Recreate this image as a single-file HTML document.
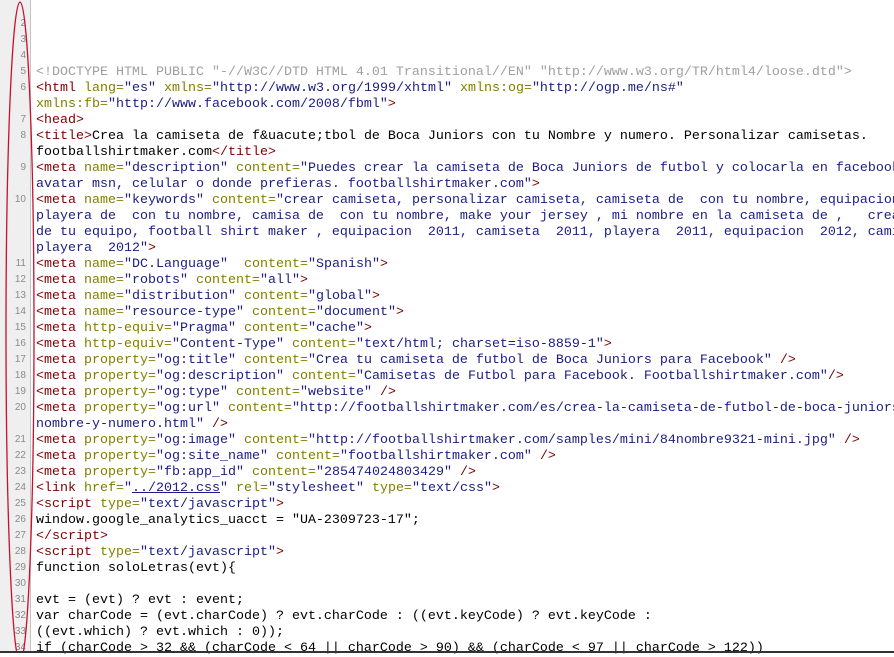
<!DOCTYPE html>
<html><head><style>
body{margin:0;width:894px;height:653px;overflow:hidden;background:#fff;position:relative;font-family:"Liberation Mono",monospace;}
#g{position:absolute;left:0;top:0;width:30px;height:653px;background:#efefef;border-right:1px solid #c4c4c4;}
.n{position:absolute;right:4px;width:26px;text-align:right;font:10px "Liberation Sans",sans-serif;color:#8a8a8a;line-height:16px;}
#c{position:absolute;left:36px;top:1px;font-size:13.33px;line-height:16px;color:#000;}
#c div{height:16px;white-space:pre;}
.t{color:#800000}.a{color:#808000}.v{color:#1c1c84}.d{color:#a0a0a0}
</style></head><body>
<div id="g">
<div class="n" style="top:16px">2</div><div class="n" style="top:32px">3</div><div class="n" style="top:48px">4</div><div class="n" style="top:64px">5</div><div class="n" style="top:80px">6</div><div class="n" style="top:112px">7</div><div class="n" style="top:128px">8</div><div class="n" style="top:160px">9</div><div class="n" style="top:192px">10</div><div class="n" style="top:256px">11</div><div class="n" style="top:272px">12</div><div class="n" style="top:288px">13</div><div class="n" style="top:304px">14</div><div class="n" style="top:320px">15</div><div class="n" style="top:336px">16</div><div class="n" style="top:352px">17</div><div class="n" style="top:368px">18</div><div class="n" style="top:384px">19</div><div class="n" style="top:400px">20</div><div class="n" style="top:432px">21</div><div class="n" style="top:448px">22</div><div class="n" style="top:464px">23</div><div class="n" style="top:480px">24</div><div class="n" style="top:496px">25</div><div class="n" style="top:512px">26</div><div class="n" style="top:528px">27</div><div class="n" style="top:544px">28</div><div class="n" style="top:560px">29</div><div class="n" style="top:576px">30</div><div class="n" style="top:592px">31</div><div class="n" style="top:608px">32</div><div class="n" style="top:624px">33</div><div class="n" style="top:640px">34</div>
</div>
<div id="c">
<div> </div><div> </div><div> </div><div> </div>
<div class="d">&lt;!DOCTYPE HTML PUBLIC "-//W3C//DTD HTML 4.01 Transitional//EN" "http://www.w3.org/TR/html4/loose.dtd"&gt;</div>
<div><span class="t">&lt;html</span> <span class="a">lang=</span><span class="v">"es"</span> <span class="a">xmlns=</span><span class="v">"http://www.w3.org/1999/xhtml"</span> <span class="a">xmlns:og=</span><span class="v">"http://ogp.me/ns#"</span></div>
<div><span class="a">xmlns:fb=</span><span class="v">"http://www.facebook.com/2008/fbml"</span><span class="t">&gt;</span></div>
<div class="t">&lt;head&gt;</div>
<div><span class="t">&lt;title&gt;</span>Crea la camiseta de f&amp;uacute;tbol de Boca Juniors con tu Nombre y numero. Personalizar camisetas.</div>
<div>footballshirtmaker.com<span class="t">&lt;/title&gt;</span></div>
<div><span class="t">&lt;meta</span> <span class="a">name=</span><span class="v">"description"</span> <span class="a">content=</span><span class="v">"Puedes crear la camiseta de Boca Juniors de futbol y colocarla en facebook</span></div>
<div class="v">avatar msn, celular o donde prefieras. footballshirtmaker.com"<span class="t">&gt;</span></div>
<div><span class="t">&lt;meta</span> <span class="a">name=</span><span class="v">"keywords"</span> <span class="a">content=</span><span class="v">"crear camiseta, personalizar camiseta, camiseta de  con tu nombre, equipacion</span></div>
<div class="v">playera de  con tu nombre, camisa de  con tu nombre, make your jersey , mi nombre en la camiseta de ,   crea</div>
<div class="v">de tu equipo, football shirt maker , equipacion  2011, camiseta  2011, playera  2011, equipacion  2012, cami</div>
<div class="v">playera  2012"<span class="t">&gt;</span></div>
<div><span class="t">&lt;meta</span> <span class="a">name=</span><span class="v">"DC.Language"</span>  <span class="a">content=</span><span class="v">"Spanish"</span><span class="t">&gt;</span></div>
<div><span class="t">&lt;meta</span> <span class="a">name=</span><span class="v">"robots"</span> <span class="a">content=</span><span class="v">"all"</span><span class="t">&gt;</span></div>
<div><span class="t">&lt;meta</span> <span class="a">name=</span><span class="v">"distribution"</span> <span class="a">content=</span><span class="v">"global"</span><span class="t">&gt;</span></div>
<div><span class="t">&lt;meta</span> <span class="a">name=</span><span class="v">"resource-type"</span> <span class="a">content=</span><span class="v">"document"</span><span class="t">&gt;</span></div>
<div><span class="t">&lt;meta</span> <span class="a">http-equiv=</span><span class="v">"Pragma"</span> <span class="a">content=</span><span class="v">"cache"</span><span class="t">&gt;</span></div>
<div><span class="t">&lt;meta</span> <span class="a">http-equiv=</span><span class="v">"Content-Type"</span> <span class="a">content=</span><span class="v">"text/html; charset=iso-8859-1"</span><span class="t">&gt;</span></div>
<div><span class="t">&lt;meta</span> <span class="a">property=</span><span class="v">"og:title"</span> <span class="a">content=</span><span class="v">"Crea tu camiseta de futbol de Boca Juniors para Facebook"</span> <span class="t">/&gt;</span></div>
<div><span class="t">&lt;meta</span> <span class="a">property=</span><span class="v">"og:description"</span> <span class="a">content=</span><span class="v">"Camisetas de Futbol para Facebook. Footballshirtmaker.com"</span><span class="t">/&gt;</span></div>
<div><span class="t">&lt;meta</span> <span class="a">property=</span><span class="v">"og:type"</span> <span class="a">content=</span><span class="v">"website"</span> <span class="t">/&gt;</span></div>
<div><span class="t">&lt;meta</span> <span class="a">property=</span><span class="v">"og:url"</span> <span class="a">content=</span><span class="v">"http://footballshirtmaker.com/es/crea-la-camiseta-de-futbol-de-boca-juniors</span></div>
<div><span class="v">nombre-y-numero.html"</span> <span class="t">/&gt;</span></div>
<div><span class="t">&lt;meta</span> <span class="a">property=</span><span class="v">"og:image"</span> <span class="a">content=</span><span class="v">"http://footballshirtmaker.com/samples/mini/84nombre9321-mini.jpg"</span> <span class="t">/&gt;</span></div>
<div><span class="t">&lt;meta</span> <span class="a">property=</span><span class="v">"og:site_name"</span> <span class="a">content=</span><span class="v">"footballshirtmaker.com"</span> <span class="t">/&gt;</span></div>
<div><span class="t">&lt;meta</span> <span class="a">property=</span><span class="v">"fb:app_id"</span> <span class="a">content=</span><span class="v">"285474024803429"</span> <span class="t">/&gt;</span></div>
<div><span class="t">&lt;link</span> <span class="a">href=</span><span class="v">"<u>../2012.css</u>"</span> <span class="a">rel=</span><span class="v">"stylesheet"</span> <span class="a">type=</span><span class="v">"text/css"</span><span class="t">&gt;</span></div>
<div><span class="t">&lt;script</span> <span class="a">type=</span><span class="v">"text/javascript"</span><span class="t">&gt;</span></div>
<div>window.google_analytics_uacct = "UA-2309723-17";</div>
<div class="t">&lt;/script&gt;</div>
<div><span class="t">&lt;script</span> <span class="a">type=</span><span class="v">"text/javascript"</span><span class="t">&gt;</span></div>
<div>function soloLetras(evt){</div>
<div> </div>
<div>evt = (evt) ? evt : event;</div>
<div>var charCode = (evt.charCode) ? evt.charCode : ((evt.keyCode) ? evt.keyCode :</div>
<div>((evt.which) ? evt.which : 0));</div>
<div>if (charCode &gt; 32 &amp;&amp; (charCode &lt; 64 || charCode &gt; 90) &amp;&amp; (charCode &lt; 97 || charCode &gt; 122))</div>
</div>
<svg style="position:absolute;left:0;top:0" width="894" height="653"><ellipse cx="20" cy="332" rx="14" ry="330" fill="none" stroke="#c8102e" stroke-width="1.3"/><line x1="0" y1="652" x2="894" y2="652" stroke="#333" stroke-width="2"/></svg>
</body></html>
